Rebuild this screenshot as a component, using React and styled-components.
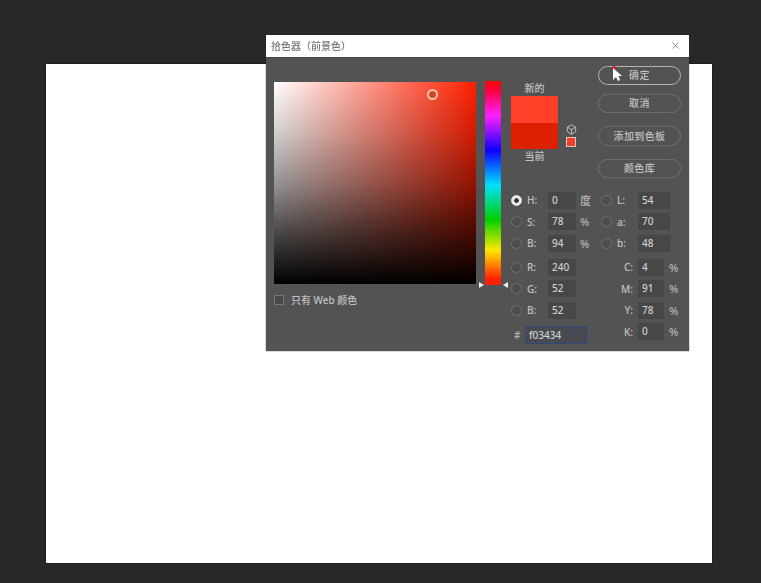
import React from 'react'
import styled, { createGlobalStyle } from 'styled-components'
import { X, Box } from 'lucide-react'

const Global = createGlobalStyle`
  html, body {
    margin: 0;
    height: 583px;
    overflow: hidden;
    background: #282828;
    font-family: "Noto Sans", "Noto Sans CJK SC", sans-serif;
  }
`

const Workspace = styled.div`
  padding: 64px 49px 20px 46px;
`

const Canvas = styled.div`
  position: relative;
  height: 499px;
  background: #fff;
  box-shadow: 0 0 2px #111;
`

const Dialog = styled.div`
  position: absolute;
  left: 220px;
  top: -29px;
  width: 423px;
  filter: blur(0.5px);
  box-shadow: 0 0 1px #222;
`

const TitleBar = styled.div`
  position: relative;
  height: 22px;
  box-sizing: border-box;
  background: #fff;
  box-shadow: 0 1px 0 #444;
  display: flex;
  align-items: center;
  justify-content: space-between;
  padding: 0 8px 2px 5px;
  font-size: 10px;
  font-weight: 500;
  color: #777;
  svg {
    color: #444;
  }
`

const Body = styled.div`
  height: 294px;
  background: #535353;
  display: flex;
  padding-left: 8px;
  box-sizing: border-box;
`

const LeftColumn = styled.div`
  width: 202px;
  padding-top: 25px;
`

const ColorField = styled.div`
  position: relative;
  width: 202px;
  height: 202px;
  background: linear-gradient(
      to top,
      #000 0%,
      rgba(0, 0, 0, 0.72) 25%,
      rgba(0, 0, 0, 0.42) 50%,
      rgba(0, 0, 0, 0.18) 75%,
      rgba(0, 0, 0, 0) 100%
    ),
    linear-gradient(to right, #fff, #ff1f00);
`

const FieldMarker = styled.div`
  position: absolute;
  left: 153px;
  top: 7px;
  width: 7px;
  height: 7px;
  border: 2px solid #f6c8a8;
  border-radius: 50%;
  background: rgba(190, 70, 40, 0.7);
`

const WebOnly = styled.label`
  display: flex;
  align-items: center;
  gap: 7px;
  margin-top: 10px;
  height: 12px;
  font-size: 10px;
  font-weight: 500;
  color: #c2c2c2;
`

const WebOnlyText = styled.span`
  margin-bottom: 2px;
`

const CheckBox = styled.span`
  width: 8px;
  height: 8px;
  border: 1px solid #777;
  background: #4a4a4a;
`

const HueStrip = styled.div`
  position: relative;
  width: 16px;
  height: 204px;
  margin: 24px 0 0 9px;
  background: linear-gradient(
    to bottom,
    #ff0000 0%,
    #ff0040 5%,
    #ff20ff 17%,
    #1000ff 34%,
    #00e0ff 51%,
    #00d000 68%,
    #ffe800 83%,
    #ff2000 97%
  );
`

const Pointer = styled.span`
  position: absolute;
  bottom: -3px;
  ${(p) => (p.$side === 'left' ? 'left: -6px;' : 'right: -7px;')}
  border-top: 3px solid transparent;
  border-bottom: 3px solid transparent;
  ${(p) =>
    p.$side === 'left' ? 'border-left: 5px solid #eee;' : 'border-right: 5px solid #eee;'}
`

const RightColumn = styled.div`
  width: 178px;
  margin-left: 10px;
`

const TopArea = styled.div`
  height: 134px;
  display: flex;
`

const SwatchColumn = styled.div`
  width: 47px;
  padding-top: 24px;
  text-align: center;
  font-size: 10px;
  font-weight: 500;
  line-height: 14px;
  color: #c2c2c2;
`

const Swatch = styled.div`
  height: ${(p) => p.$height}px;
  background: ${(p) => p.$color};
`

const SwatchStack = styled.div`
  margin-top: 1px;
`

const GamutColumn = styled.div`
  width: 12px;
  margin-left: 7px;
  padding-top: 67px;
  display: flex;
  flex-direction: column;
  align-items: center;
  gap: 2px;
  color: #d0d0d0;
`

const WebSwatch = styled.div`
  width: 8px;
  height: 8px;
  background: #f0402c;
  border: 1px solid #e8c4bc;
`

const ButtonColumn = styled.div`
  margin-left: 21px;
  padding-top: 9px;
  display: flex;
  flex-direction: column;
`

const Button = styled.div`
  position: relative;
  width: 83px;
  height: ${(p) => p.$height || 19}px;
  margin-top: ${(p) => p.$gap || 0}px;
  padding-bottom: 2px;
  box-sizing: border-box;
  border: 1.5px solid ${(p) => (p.$primary ? '#b4b4b4' : '#6c6c6c')};
  border-radius: 10px;
  display: flex;
  align-items: center;
  justify-content: center;
  font-size: 10px;
  font-weight: 500;
  letter-spacing: 0.4px;
  color: #c2c2c2;
`

const Cursor = styled.svg`
  position: absolute;
  left: 12px;
  top: -2px;
`

const Fields = styled.div`
  display: flex;
  padding-top: 0.5px;
`

const FieldGroup = styled.div`
  width: ${(p) => p.$width}px;
  display: flex;
  flex-direction: column;
  gap: 4.5px;
`

const Row = styled.div`
  height: 17px;
  margin-top: ${(p) => p.$gap || 0}px;
  display: grid;
  grid-template-columns: ${(p) => p.$columns};
  align-items: center;
  font-size: 10px;
  font-weight: 500;
  color: #c2c2c2;
`

const Radio = styled.span`
  width: 9px;
  height: 9px;
  border-radius: 50%;
  border: 1px solid ${(p) => (p.$checked ? '#e8e8e8' : '#6e6e6e')};
  background: ${(p) =>
    p.$checked ? 'radial-gradient(circle, #333 0 2px, #e8e8e8 2.5px)' : '#4e4e4e'};
`

const Label = styled.span`
  text-align: ${(p) => (p.$right ? 'right' : 'left')};
  padding-right: ${(p) => (p.$right ? '5px' : '0')};
`

const Value = styled.div`
  height: 17px;
  line-height: 17px;
  padding-left: 4px;
  box-sizing: border-box;
  background: #474747;
  font-size: 10px;
  font-weight: 500;
  color: #cfcfcf;
`

const Unit = styled.span`
  padding-left: ${(p) => p.$pad}px;
  font-size: 11px;
  color: #b4b4b4;
`

const HexRow = styled.div`
  height: 18px;
  margin-top: 3px;
  display: grid;
  grid-template-columns: 14px 62px;
  align-items: center;
  font-size: 10px;
  font-weight: 500;
  color: #b4b4b4;
`

const HexMark = styled.span`
  padding-left: 3px;
`

const HexValue = styled.div`
  height: 18px;
  line-height: 16px;
  box-sizing: border-box;
  padding-left: 3px;
  background: #474a50;
  border: 1.5px solid #2f4a7a;
  font-size: 10px;
  color: #cfcfcf;
`

const hsb = [
  { key: 'H', value: '0', unit: '度', checked: true },
  { key: 'S', value: '78', unit: '%' },
  { key: 'B', value: '94', unit: '%' },
]
const rgb = [
  { key: 'R', value: '240', gap: 2.5 },
  { key: 'G', value: '52' },
  { key: 'B', value: '52' },
]
const lab = [
  { key: 'L', value: '54' },
  { key: 'a', value: '70' },
  { key: 'b', value: '48' },
]
const cmyk = [
  { key: 'C', value: '4', gap: 2.5 },
  { key: 'M', value: '91' },
  { key: 'Y', value: '78' },
  { key: 'K', value: '0' },
]

export default function App() {
  return (
    <>
      <Global />
      <Workspace>
        <Canvas>
          <Dialog>
            <TitleBar>
              <span>拾色器（前景色）</span>
              <X size={11} strokeWidth={1.3} />
            </TitleBar>
            <Body>
              <LeftColumn>
                <ColorField>
                  <FieldMarker />
                </ColorField>
                <WebOnly>
                  <CheckBox />
                  <WebOnlyText>只有 Web 颜色</WebOnlyText>
                </WebOnly>
              </LeftColumn>
              <HueStrip>
                <Pointer $side="left" />
                <Pointer $side="right" />
              </HueStrip>
              <RightColumn>
                <TopArea>
                  <SwatchColumn>
                    新的
                    <SwatchStack>
                      <Swatch $height={27} $color="#ff4028" />
                      <Swatch $height={26} $color="#dc2000" />
                    </SwatchStack>
                    当前
                  </SwatchColumn>
                  <GamutColumn>
                    <Box size={11} strokeWidth={1.8} />
                    <WebSwatch />
                  </GamutColumn>
                  <ButtonColumn>
                    <Button $primary>
                      <Cursor width="12" height="16" viewBox="0 0 12 16">
                        <circle cx="3" cy="3" r="2" fill="#d02028" />
                        <path d="M2 3 L2 15 L5 12 L7 16 L9 15 L7.500 11 L11 11 Z" fill="#fff" />
                      </Cursor>
                      确定
                    </Button>
                    <Button $gap={9}>取消</Button>
                    <Button $gap={13} $height={20}>添加到色板</Button>
                    <Button $gap={13}>颜色库</Button>
                  </ButtonColumn>
                </TopArea>
                <Fields>
                  <FieldGroup $width={90}>
                    {hsb.map((f) => (
                      <Row key={f.key} $columns="16px 21px 28px auto">
                        <Radio $checked={f.checked} />
                        <Label>{f.key}:</Label>
                        <Value>{f.value}</Value>
                        <Unit $pad={4}>{f.unit}</Unit>
                      </Row>
                    ))}
                    {rgb.map((f) => (
                      <Row key={f.key} $gap={f.gap} $columns="16px 21px 28px auto">
                        <Radio />
                        <Label>{f.key}:</Label>
                        <Value>{f.value}</Value>
                      </Row>
                    ))}
                    <HexRow>
                      <HexMark>#</HexMark>
                      <HexValue>f03434</HexValue>
                    </HexRow>
                  </FieldGroup>
                  <FieldGroup $width={88}>
                    {lab.map((f) => (
                      <Row key={f.key} $columns="16px 21px 32px">
                        <Radio />
                        <Label>{f.key}:</Label>
                        <Value>{f.value}</Value>
                      </Row>
                    ))}
                    {cmyk.map((f) => (
                      <Row key={f.key} $gap={f.gap} $columns="37px 26px auto">
                        <Label $right>{f.key}:</Label>
                        <Value>{f.value}</Value>
                        <Unit $pad={5}>%</Unit>
                      </Row>
                    ))}
                  </FieldGroup>
                </Fields>
              </RightColumn>
            </Body>
          </Dialog>
        </Canvas>
      </Workspace>
    </>
  )
}
